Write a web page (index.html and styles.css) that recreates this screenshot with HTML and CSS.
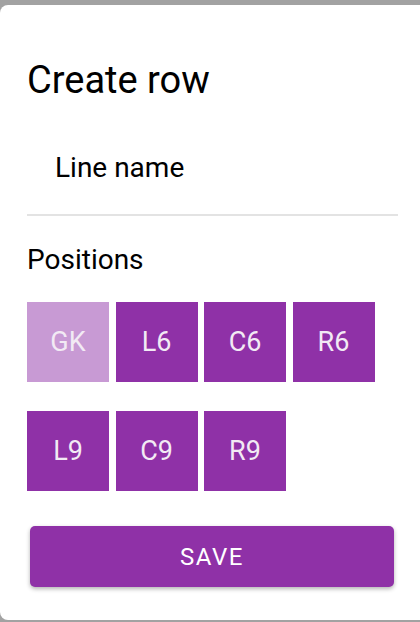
FILE: index.html
```html
<!DOCTYPE html>
<html lang="en">
<head>
    <meta charset="UTF-8">
    <meta name="viewport" content="width=device-width, initial-scale=1.0">
    <title>Create row</title>
    <link rel="stylesheet" href="styles.css">
</head>
<body>
    <div class="dialog">
        <h2 class="dialog-title">Create row</h2>

        <input class="line-name" type="text" placeholder="Line name">

        <p class="label">Positions</p>
        <div class="positions">
            <button class="pos selected">GK</button>
            <button class="pos">L6</button>
            <button class="pos">C6</button>
            <button class="pos">R6</button>
            <button class="pos">L9</button>
            <button class="pos">C9</button>
            <button class="pos">R9</button>
        </div>

        <button class="save-button">SAVE</button>
    </div>
</body>
</html>
```

FILE: styles.css
```css
body {
    margin: 0;
    padding: 0;
    height: 622px;
    overflow: hidden;
    background: #a2a2a2;
    font-family: Roboto, "Liberation Sans", sans-serif;
    color: #000;
}
.dialog {
    margin-top: 5px;
    height: 615px;
    box-sizing: border-box;
    background: white;
    border-radius: 8px 0 0 8px;
    padding: 53px 22px 0 27px;
}
.dialog-title {
    margin: 0;
    font-size: 38px;
    line-height: 44px;
    font-weight: 400;
}
.line-name {
    display: block;
    box-sizing: content-box;
    width: calc(100% - 28px);
    height: 34px;
    margin: 49px 0 0;
    padding: 0 0 29px 28px;
    border: none;
    border-bottom: 2px solid #e3e3e3;
    font-family: inherit;
    font-size: 28px;
    line-height: 34px;
    color: #000;
    outline: none;
}
.line-name::placeholder {
    color: #000;
}
.label {
    margin: 27px 0 0;
    font-size: 28px;
    line-height: 34px;
}
.positions {
    display: grid;
    grid-template-columns: repeat(4, 82px);
    grid-auto-rows: 80px;
    column-gap: 6.5px;
    row-gap: 29px;
    margin-top: 25px;
}
.pos {
    border: none;
    padding: 0;
    background: #8f31a7;
    color: #f2eaf4;
    font-family: inherit;
    font-size: 27px;
    cursor: pointer;
}
.pos.selected {
    background: #c89ad4;
}
.save-button {
    display: block;
    width: 364px;
    height: 61px;
    margin: 35px 0 0 3px;
    border: none;
    border-radius: 5px;
    background: #8f31a7;
    color: white;
    font-family: inherit;
    font-size: 24px;
    letter-spacing: 1.6px;
    box-shadow: 0 2px 4px rgba(0, 0, 0, 0.3);
    cursor: pointer;
}
```
